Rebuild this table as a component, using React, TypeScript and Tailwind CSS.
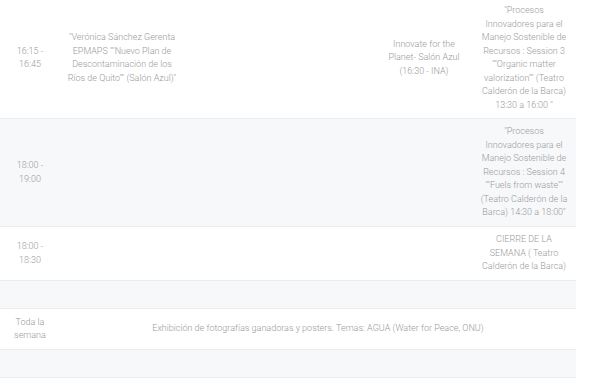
import React from "react";

const cell = "px-2 py-[6px] text-center align-middle";
const cell2 = "px-[5px] py-[6px] text-center align-middle";

export default function App() {
  return (
    <div className="w-[600px] h-[379px] overflow-hidden bg-white">
      <table
        className="table-fixed border-collapse w-[576px] mt-[-2px] text-[9px] leading-[13.5px] text-[#9a9a9a] font-light"
        style={{ fontFamily: "Roboto, 'Liberation Sans', sans-serif" }}
      >
        <colgroup>
          <col className="w-[60px]" />
          <col className="w-[124px]" />
          <col className="w-[192px]" />
          <col className="w-[96px]" />
          <col className="w-[104px]" />
        </colgroup>
        <tbody>
          <tr className="bg-white border-b border-[#ececec]">
            <td className={cell}>16:15 - 16:45</td>
            <td className={cell2}>
              "Verónica Sánchez Gerenta EPMAPS ""Nuevo Plan de Descontaminación de los Ríos de Quito"" (Salón Azul)"
            </td>
            <td className={cell}></td>
            <td className={cell}>Innovate for the Planet- Salón Azul (16:30 - INA)</td>
            <td className={cell}>
              "Procesos Innovadores para el Manejo Sostenible de Recursos : Session 3 ""Organic matter valorization"" (Teatro Calderón de la Barca) 13:30 a 16:00 "
            </td>
          </tr>
          <tr className="bg-[#f7f8fa] border-b border-[#ececec] h-[108px]">
            <td className={cell}>18:00 - 19:00</td>
            <td className={cell}></td>
            <td className={cell}></td>
            <td className={cell}></td>
            <td className={cell}>
              "Procesos Innovadores para el Manejo Sostenible de Recursos : Session 4 ""Fuels from waste"" (Teatro Calderón de la Barca) 14:30 a 18:00"
            </td>
          </tr>
          <tr className="bg-white border-b border-[#ececec] h-[54px]">
            <td className={cell}>18:00 - 18:30</td>
            <td className={cell}></td>
            <td className={cell}></td>
            <td className={cell}></td>
            <td className={cell}>CIERRE DE LA SEMANA ( Teatro Calderón de la Barca)</td>
          </tr>
          <tr className="bg-[#f7f8fa] border-b border-[#ececec] h-[28px]">
            <td className={cell}>&nbsp;</td>
            <td className={cell}></td>
            <td className={cell}></td>
            <td className={cell}></td>
            <td className={cell}></td>
          </tr>
          <tr className="bg-white border-b border-[#ececec] h-[41px]">
            <td className={cell}>Toda la semana</td>
            <td className={cell} colSpan={4}>
              Exhibición de fotografías ganadoras y posters. Temas: AGUA (Water for Peace, ONU)
            </td>
          </tr>
          <tr className="bg-[#f7f8fa] border-b border-[#ececec] h-[28px]">
            <td className={cell}>&nbsp;</td>
            <td className={cell}></td>
            <td className={cell}></td>
            <td className={cell}></td>
            <td className={cell}></td>
          </tr>
        </tbody>
      </table>
    </div>
  );
}
